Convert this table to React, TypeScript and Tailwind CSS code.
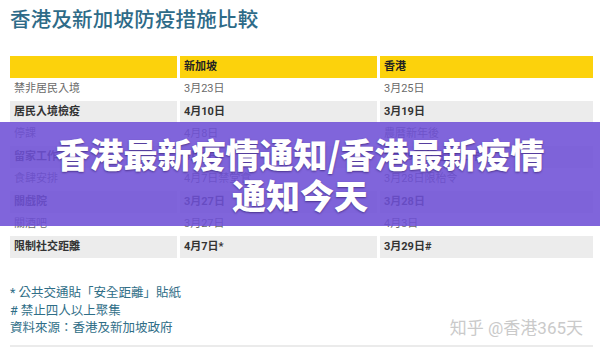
import React from "react";

const rows: [string, string, string][] = [
  ["禁非居民入境", "3月23日", "3月25日"],
  ["居民入境檢疫", "4月10日", "3月19日"],
  ["停課", "4月8日", "農曆新年後"],
  ["留家工作", "4月7日", "1月29日起在家工作"],
  ["食肆安排", "4月7日禁堂食", "3月28日限枱令"],
  ["關戲院", "3月27日", "3月28日"],
  ["關酒吧", "3月27日", "4月3日"],
  ["限制社交距離", "4月7日*", "3月29日#"],
];

export default function App() {
  return (
    <div
      className="relative w-[600px] h-[349px] overflow-hidden bg-white"
      style={{ fontFamily: 'Roboto, "Noto Sans CJK TC", "Noto Sans CJK SC", sans-serif' }}
    >
      <div className="pl-[10px] pt-[6px] text-[20.5px] leading-[28px] font-medium text-[#2e6b88] tracking-[0.2px]">
        香港及新加坡防疫措施比較
      </div>
      <div className="mt-[22px] ml-[10px] w-[583px] flex flex-col">
        <div className="grid grid-cols-[167px_197px_213px] gap-x-[3px] h-[22px] text-[11px] font-bold text-[#222]">
          <div className="bg-[#fcd20c]" />
          <div className="bg-[#fcd20c] flex items-center pl-[4px]">新加坡</div>
          <div className="bg-[#fcd20c] flex items-center pl-[4px]">香港</div>
        </div>
        {rows.map((r, i) => {
          const gray = i % 2 === 1;
          const cell = gray
            ? "bg-[#ececec] flex items-center font-bold text-[#333]"
            : "bg-white flex items-center text-[#6a6a6a]";
          return (
            <div
              key={i}
              className="grid grid-cols-[167px_197px_213px] gap-x-[3px] h-[22.5px] text-[11px]"
            >
              <div className={cell + " pl-[4px]"}>{r[0]}</div>
              <div className={cell + " pl-[4px]"}>{r[1]}</div>
              <div className={cell + " pl-[4px]"}>{r[2]}</div>
            </div>
          );
        })}
      </div>
      <div className="mt-[26px] ml-[10px] text-[12.5px] leading-[17.5px] text-[#2f6e87]">
        <div>* 公共交通貼「安全距離」貼紙</div>
        <div># 禁止四人以上聚集</div>
        <div>資料來源：香港及新加坡政府</div>
      </div>
      <div className="absolute right-[17px] top-[318px] text-[17px] leading-[20px] text-[#cacaca] [text-shadow:0_0_2px_#fff]">
        知乎 @香港365天
      </div>
      <div className="absolute left-[10px] top-[345px] w-[583px] h-[2px] bg-[#ebebeb]" />
      <div className="absolute left-0 top-[122px] w-[600px] h-[104px] bg-[#6e50d6]/[0.88] flex flex-col items-center justify-center">
        <div
          className="text-white font-black text-[34px] leading-[41px] text-center [text-shadow:0_1px_2px_rgba(40,20,90,0.6)]"
          style={{ fontFamily: '"Noto Sans CJK SC", "Noto Sans CJK TC", sans-serif' }}
        >
          <div>香港最新疫情通知/香港最新疫情</div>
          <div>通知今天</div>
        </div>
      </div>
    </div>
  );
}
